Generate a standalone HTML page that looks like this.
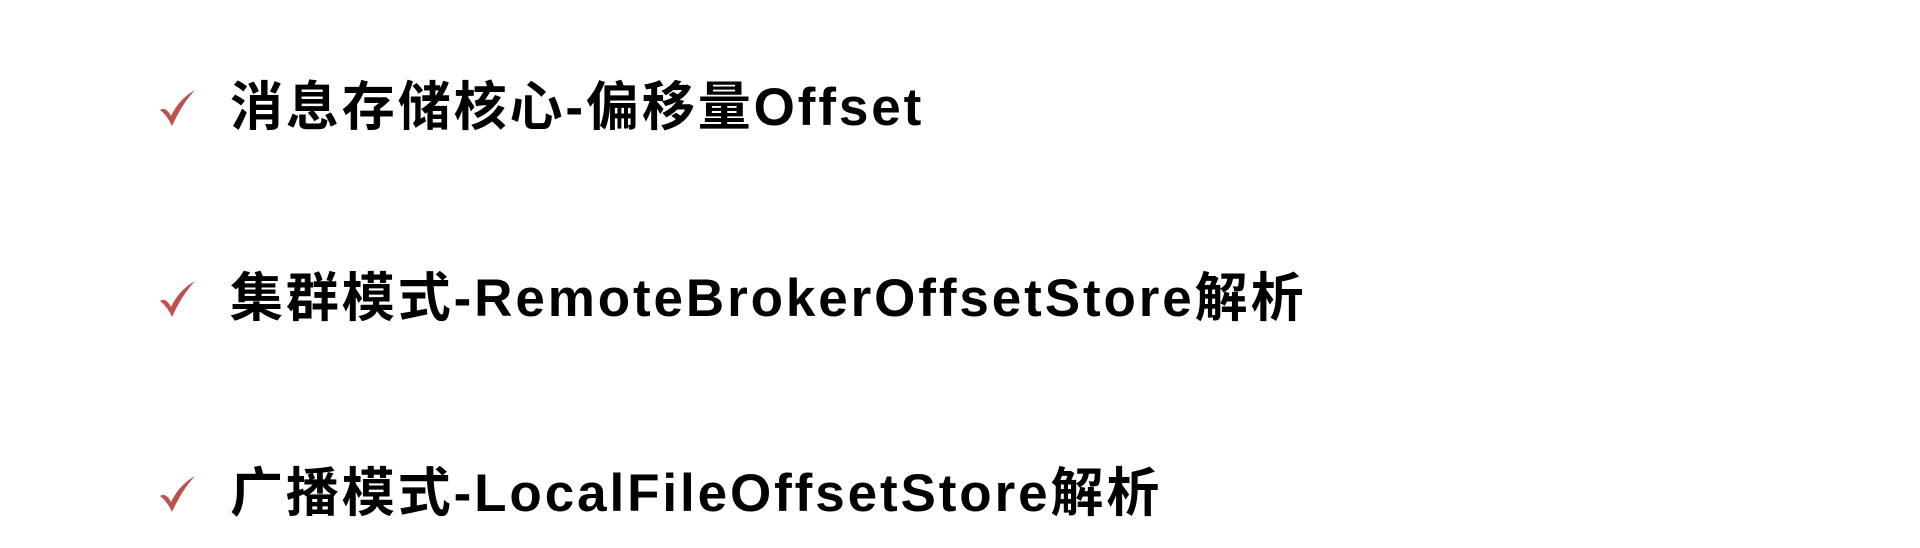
<!DOCTYPE html>
<html><head><meta charset="utf-8"><style>
html,body{margin:0;padding:0;background:#fff;width:1920px;height:548px;overflow:hidden}
.row{position:absolute;left:0;height:60px;width:1920px}
.t{position:absolute;left:230px;top:0;font-family:"Liberation Sans","Noto Sans CJK SC",sans-serif;font-weight:bold;font-size:53px;letter-spacing:2.9px;line-height:60px;color:#000;white-space:nowrap}
svg{position:absolute;left:158px;top:9px}
</style></head><body>
<div class="row" style="top:78px"><svg width="40" height="42" viewBox="0 0 40 40"><path d="M2 22 Q8 18 13 28 Q21 11 37 2 Q24 16 14 38 Q9 27 2 22Z" fill="#c0504d"/></svg><div class="t">消息存储核心-偏移量Offset</div></div>
<div class="row" style="top:269px"><svg width="40" height="42" viewBox="0 0 40 40"><path d="M2 22 Q8 18 13 28 Q21 11 37 2 Q24 16 14 38 Q9 27 2 22Z" fill="#c0504d"/></svg><div class="t">集群模式-RemoteBrokerOffsetStore解析</div></div>
<div class="row" style="top:464px"><svg width="40" height="42" viewBox="0 0 40 40"><path d="M2 22 Q8 18 13 28 Q21 11 37 2 Q24 16 14 38 Q9 27 2 22Z" fill="#c0504d"/></svg><div class="t">广播模式-LocalFileOffsetStore解析</div></div>
</body></html>
